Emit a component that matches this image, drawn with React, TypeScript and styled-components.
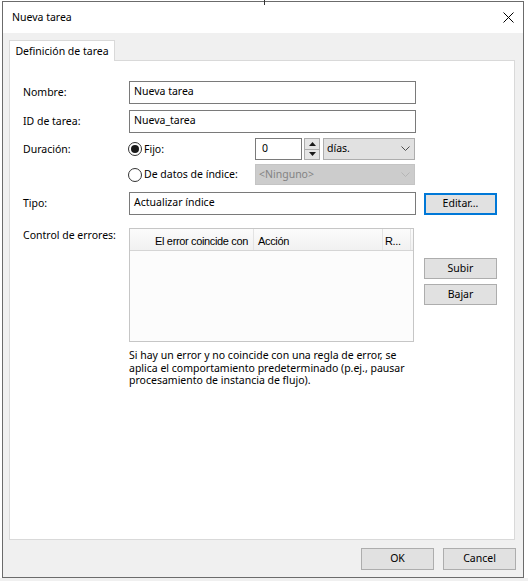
import React from "react";
import styled, { createGlobalStyle } from "styled-components";

const UI = `"Noto Sans", "Liberation Sans", sans-serif`;

const GlobalStyle = createGlobalStyle`
  html, body { margin: 0; padding: 0; }
  body {
    width: 528px;
    height: 581px;
    overflow: hidden;
    background: #fff;
    font-family: ${UI};
    font-size: 10.5px;
    color: #000;
  }
  * { box-sizing: border-box; }
`;

const Screen = styled.div`
  position: relative;
  width: 528px;
  height: 581px;
  padding: 1px 0 0 2px;
  background: linear-gradient(to bottom, #fff 0, #fff 578px, #f0f0f0 578px);
`;

const CursorMark = styled.div`
  position: absolute;
  left: 264px;
  top: 0;
  width: 1px;
  height: 5px;
  background: #333;
`;

const Window = styled.div`
  width: 522px;
  height: 577px;
  border: 1px solid #6b6b6b;
  display: flex;
  flex-direction: column;
  background: #f0f0f0;
`;

const TitleBar = styled.div`
  height: 31px;
  flex: none;
  background: #fff;
  display: flex;
  align-items: center;
  justify-content: space-between;
  padding: 0 9px 0 9px;
`;

const TitleText = styled.span`
  font-size: 10.5px;
  line-height: 14px;
  padding-bottom: 1px;
`;

const Client = styled.div`
  flex: 1;
  display: flex;
  flex-direction: column;
  padding: 7px 8px 7px 6px;
`;

const TabStrip = styled.div`
  display: flex;
  height: 21px;
  margin-bottom: -1px;
  position: relative;
  z-index: 1;
`;

const Tab = styled.div`
  width: 106px;
  height: 21px;
  background: #fff;
  border: 1px solid #d9d9d9;
  border-bottom: none;
  display: flex;
  align-items: center;
  justify-content: center;
  line-height: 14px;
  padding-bottom: 1px;
`;

const Panel = styled.div`
  height: 480px;
  background: #fff;
  border: 1px solid #d9d9d9;
  padding: 20px 0 0 13px;
  display: flex;
  flex-direction: column;
`;

const Row = styled.div<{ $top: number; $h: number }>`
  display: grid;
  grid-template-columns: 98px 287px 73px;
  column-gap: 8px;
  align-items: center;
  margin-top: ${(p) => p.$top}px;
  height: ${(p) => p.$h}px;
`;

const Label = styled.div<{ $start?: boolean }>`
  line-height: 13px;
  white-space: nowrap;
  align-self: ${(p) => (p.$start ? "start" : "center")};
  padding-top: ${(p) => (p.$start ? "1px" : "0")};
`;

const TextBox = styled.div<{ $h?: number }>`
  height: ${(p) => p.$h ?? 23}px;
  border: 1px solid #7a7a7a;
  background: #fff;
  display: flex;
  align-items: center;
  padding: 0 0 2px 4px;
  line-height: 13px;
  white-space: nowrap;
`;

const OptionLine = styled.div`
  display: flex;
  align-items: center;
  height: 100%;
`;

const RadioWrap = styled.div`
  width: 127px;
  display: flex;
  align-items: center;
  gap: 2px;
  margin-left: -1px;
  white-space: nowrap;
  line-height: 13px;
`;

const RadioCircle = styled.span<{ $checked?: boolean }>`
  width: 14px;
  height: 14px;
  border-radius: 50%;
  border: 1px solid #333;
  background: #fff;
  display: flex;
  align-items: center;
  justify-content: center;
  flex: none;
  &::after {
    content: "";
    display: ${(p) => (p.$checked ? "block" : "none")};
    width: 8px;
    height: 8px;
    border-radius: 50%;
    background: #1a1a1a;
  }
`;

const SpinInput = styled(TextBox)`
  width: 47px;
  height: 22px;
  padding-left: 6px;
  padding-bottom: 1px;
`;

const Spin = styled.div`
  width: 16px;
  height: 22px;
  margin-left: 2px;
  display: flex;
  flex-direction: column;
`;

const SpinBtn = styled.div`
  flex: 1;
  background: #e5e5e5;
  border: 1px solid #acacac;
  display: flex;
  align-items: center;
  justify-content: center;
  & + & {
    border-top: none;
  }
`;

const Combo = styled.div<{ $w: number; $disabled?: boolean }>`
  width: ${(p) => p.$w}px;
  height: ${(p) => (p.$disabled ? 21 : 22)}px;
  margin-left: ${(p) => (p.$disabled ? 0 : 3)}px;
  background: ${(p) => (p.$disabled ? "#cccccc" : "#e1e1e1")};
  border: 1px solid ${(p) => (p.$disabled ? "#c4c4c4" : "#adadad")};
  color: ${(p) => (p.$disabled ? "#838383" : "#000")};
  display: flex;
  align-items: center;
  justify-content: space-between;
  padding: 0 4px 1px 3px;
  line-height: 13px;
  white-space: nowrap;
`;

const Button = styled.div<{ $focused?: boolean; $h?: number }>`
  width: 73px;
  height: ${(p) => p.$h ?? 22}px;
  background: #e1e1e1;
  border: ${(p) => (p.$focused ? "2px solid #0078d7" : "1px solid #adadad")};
  display: flex;
  align-items: center;
  justify-content: center;
  line-height: 13px;
  padding-bottom: 1px;
  white-space: nowrap;
`;

const ButtonColumn = styled.div`
  align-self: start;
  display: flex;
  flex-direction: column;
  gap: 5px;
  padding-top: 30px;
`;

const Grid = styled.div`
  width: 285px;
  height: 114px;
  align-self: start;
  border: 1px solid #c6c6c6;
  background: #fcfcfc;
  display: flex;
  flex-direction: column;
`;

const GridHeader = styled.div`
  height: 22px;
  display: flex;
  background: linear-gradient(to bottom, #fbfbfb, #f1f1f1);
  border-bottom: 1px solid #d5d5d5;
  font-family: "Liberation Sans", Arial, sans-serif;
  font-size: 11px;
  letter-spacing: -0.35px;
`;

const HeaderCell = styled.div<{ $w: number; $right?: boolean; $pad: number }>`
  width: ${(p) => p.$w}px;
  flex: none;
  border-right: 1px solid #e3e3e3;
  display: flex;
  align-items: center;
  justify-content: ${(p) => (p.$right ? "flex-end" : "flex-start")};
  padding: 2px ${(p) => (p.$right ? p.$pad : 0)}px 0 ${(p) => (p.$right ? 0 : p.$pad)}px;
  white-space: nowrap;
  overflow: hidden;
`;

const Info = styled.div`
  margin-top: 7px;
  margin-left: 106px;
  line-height: 12.6px;
  white-space: nowrap;
`;

const Footer = styled.div`
  display: flex;
  justify-content: flex-end;
  gap: 9px;
  margin-top: 8px;
  margin-right: -1px;
`;

const Chevron = ({ color }: { color: string }) => (
  <svg width="9" height="5" viewBox="0 0 9 5">
    <path d="M0.5 0.5 L4.5 4.5 L8.5 0.5" fill="none" stroke={color} strokeWidth="1" />
  </svg>
);

const Arrow = ({ up }: { up?: boolean }) => (
  <svg width="7" height="4" viewBox="0 0 7 4">
    <path d={up ? "M0 4 L3.5 0 L7 4 Z" : "M0 0 L3.5 4 L7 0 Z"} fill="#1a1a1a" />
  </svg>
);

const CloseIcon = () => (
  <svg width="11" height="11" viewBox="0 0 11 11">
    <path d="M0.5 0.5 L10.5 10.5 M10.5 0.5 L0.5 10.5" stroke="#000" strokeWidth="1" />
  </svg>
);

export default function App() {
  return (
    <>
      <GlobalStyle />
      <Screen>
        <CursorMark />
        <Window>
          <TitleBar>
            <TitleText>Nueva tarea</TitleText>
            <CloseIcon />
          </TitleBar>
          <Client>
            <TabStrip>
              <Tab>Definición de tarea</Tab>
            </TabStrip>
            <Panel>
              <Row $top={0} $h={23}>
                <Label>Nombre:</Label>
                <TextBox>Nueva tarea</TextBox>
              </Row>
              <Row $top={6} $h={23}>
                <Label>ID de tarea:</Label>
                <TextBox>Nueva_tarea</TextBox>
              </Row>
              <Row $top={5} $h={22}>
                <Label>Duración:</Label>
                <OptionLine>
                  <RadioWrap>
                    <RadioCircle $checked />
                    <span>Fijo:</span>
                  </RadioWrap>
                  <SpinInput>0</SpinInput>
                  <Spin>
                    <SpinBtn>
                      <Arrow up />
                    </SpinBtn>
                    <SpinBtn>
                      <Arrow />
                    </SpinBtn>
                  </Spin>
                  <Combo $w={92}>
                    <span>días.</span>
                    <Chevron color="#4d4d4d" />
                  </Combo>
                </OptionLine>
              </Row>
              <Row $top={4} $h={21}>
                <span />
                <OptionLine>
                  <RadioWrap>
                    <RadioCircle />
                    <span>De datos de índice:</span>
                  </RadioWrap>
                  <Combo $w={160} $disabled>
                    <span>&lt;Ninguno&gt;</span>
                    <Chevron color="#b5b5b5" />
                  </Combo>
                </OptionLine>
              </Row>
              <Row $top={7} $h={23}>
                <Label>Tipo:</Label>
                <TextBox>Actualizar índice</TextBox>
                <Button $focused>Editar...</Button>
              </Row>
              <Row $top={13} $h={114}>
                <Label $start>Control de errores:</Label>
                <Grid>
                  <GridHeader>
                    <HeaderCell $w={124} $right $pad={5}>
                      El error coincide con
                    </HeaderCell>
                    <HeaderCell $w={129} $pad={4}>
                      Acción
                    </HeaderCell>
                    <HeaderCell $w={28} $pad={2}>
                      R...
                    </HeaderCell>
                  </GridHeader>
                </Grid>
                <ButtonColumn>
                  <Button $h={21}>Subir</Button>
                  <Button $h={21}>Bajar</Button>
                </ButtonColumn>
              </Row>
              <Info>
                Si hay un error y no coincide con una regla de error, se
                <br />
                aplica el comportamiento predeterminado (p.ej., pausar
                <br />
                procesamiento de instancia de flujo).
              </Info>
            </Panel>
            <Footer>
              <Button>OK</Button>
              <Button>Cancel</Button>
            </Footer>
          </Client>
        </Window>
      </Screen>
    </>
  );
}
